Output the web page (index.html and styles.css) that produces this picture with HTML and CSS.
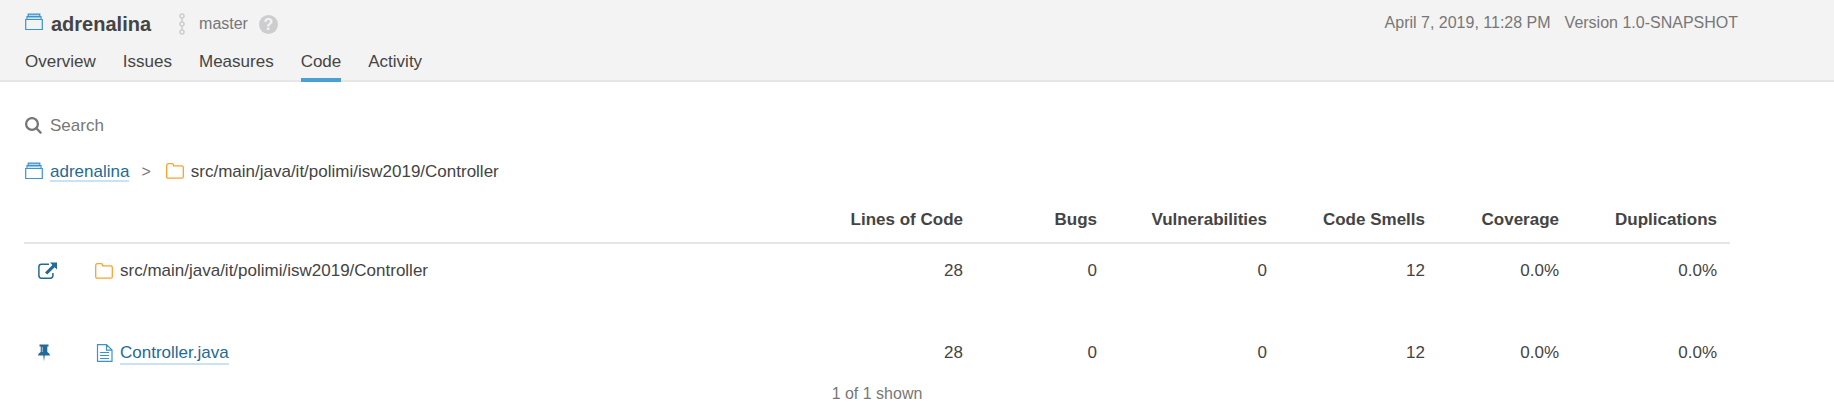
FILE: index.html
```html
<!DOCTYPE html>
<html lang="en">
<head>
<meta charset="utf-8">
<title>adrenalina - Code</title>
<link rel="stylesheet" href="styles.css">
</head>
<body>
<svg class="defs" aria-hidden="true">
  <symbol id="project" viewBox="0 0 18 18">
    <path fill="#b5d7ec" d="M3 1h12v4.500H3z"/>
    <path fill="none" stroke="#3b93cc" stroke-width="1.200" d="M.7 6.500h16.600v10H.7zM2 6V3.700h14V6M3.200 3.500V1.200h11.600v2.300"/>
  </symbol>
  <symbol id="folder" viewBox="0 0 18 18">
    <path fill="none" stroke="#ff9f2e" stroke-width="1.300" stroke-linejoin="round" d="M.7 3.400Q.7 1.700 2.400 1.700H6q1.500 0 1.500 1.500v.7h8.300q1.500 0 1.500 1.500v9.300q0 1.500-1.500 1.500H2.200q-1.500 0-1.500-1.500z"/>
  </symbol>
</svg>
<header class="header">
  <div class="header-top">
    <div class="project">
      <svg class="icon"><use href="#project"/></svg>
      <h1 class="title">adrenalina</h1>
      <svg class="branch-icon" viewBox="0 0 8 22" fill="none" stroke="#cdcdcd" stroke-width="1.500"><circle cx="4" cy="3" r="2"/><circle cx="4" cy="11" r="2"/><circle cx="4" cy="19" r="2"/><path d="M4 5v4M4 13v4"/></svg>
      <span class="branch">master</span>
      <button class="help" type="button" aria-label="Help">?</button>
    </div>
    <div class="meta"><span>April 7, 2019, 11:28 PM</span><span>Version 1.0-SNAPSHOT</span></div>
  </div>
  <nav class="tabs">
    <a class="tab" href="#">Overview</a>
    <a class="tab" href="#">Issues</a>
    <a class="tab" href="#">Measures</a>
    <a class="tab active" href="#">Code</a>
    <a class="tab" href="#">Activity</a>
  </nav>
</header>
<main class="page">
  <label class="search">
    <svg class="icon" viewBox="0 0 18 18" fill="none" stroke="#777" stroke-width="2.300"><circle cx="8" cy="7" r="5.900"/><path stroke-linecap="round" d="M12.300 11.300l4.300 4.300"/></svg>
    <input class="search-input" type="text" placeholder="Search" aria-label="Search">
  </label>
  <nav class="crumbs">
    <svg class="icon"><use href="#project"/></svg>
    <a class="link" href="#">adrenalina</a>
    <span class="separator">&gt;</span>
    <svg class="icon"><use href="#folder"/></svg>
    <span>src/main/java/it/polimi/isw2019/Controller</span>
  </nav>
  <table class="files">
    <colgroup><col class="col-action"><col><col class="col-narrow"><col class="col-narrow"><col class="col-widest"><col class="col-wide"><col class="col-narrow"><col class="col-wide"></colgroup>
    <thead>
      <tr><td></td><td></td><th scope="col">Lines of Code</th><th scope="col">Bugs</th><th scope="col">Vulnerabilities</th><th scope="col">Code Smells</th><th scope="col">Coverage</th><th scope="col">Duplications</th></tr>
    </thead>
    <tbody>
      <tr>
        <td class="action"><a class="action-link" href="#" aria-label="Open folder"><svg class="open-icon" viewBox="0 0 20 18"><path fill="none" stroke="#236a97" stroke-width="1.500" d="M11 2.200H3.500Q.9 2.200.9 4.800v8.800q0 2.600 2.600 2.600h8.800q2.600 0 2.600-2.600V11"/><path fill="#236a97" d="M12 .5h7v7l-2.300-2.300-7.500 7.400-2.200-2.200 7.400-7.500z"/></svg></a></td>
        <td class="name"><div class="name-row"><svg class="icon"><use href="#folder"/></svg><span>src/main/java/it/polimi/isw2019/Controller</span></div></td>
        <td>28</td><td>0</td><td>0</td><td>12</td><td>0.0%</td><td>0.0%</td>
      </tr>
      <tr class="spacer"><td colspan="8"></td></tr>
      <tr>
        <td class="action"><a class="action-link" href="#" aria-label="Pin file"><svg class="pin-icon" viewBox="0 0 12 18"><path fill="#236a97" d="M1.500.5h9v2H9.300V8Q11.900 9 12 11.600H6.700L6 17.500l-.7-5.900H0Q.1 9 2.700 8V2.500H1.500z"/><path stroke="#a7c3d5" d="M4.300 3v5"/></svg></a></td>
        <td class="name"><div class="name-row"><svg class="icon" viewBox="0 0 18 18"><path fill="none" stroke="#3b93cc" stroke-width="1.200" d="M2.500.6h9l5.500 5.500v11.300H2.500zM11.500.8v5.300h5.300M5 8.500h9M5 11.500h9M5 14.500h9"/></svg><a class="link" href="#">Controller.java</a></div></td>
        <td>28</td><td>0</td><td>0</td><td>12</td><td>0.0%</td><td>0.0%</td>
      </tr>
    </tbody>
  </table>
  <footer class="count">1 of 1 shown</footer>
</main>
</body>
</html>
```
FILE: styles.css
```css
* { box-sizing: border-box; }
body {
  margin: 0;
  background: #fff;
  color: #444;
  font: 17px/20px "Liberation Sans", Arial, sans-serif;
}
.defs { position: absolute; width: 0; height: 0; }
svg { display: block; flex: none; }
a { text-decoration: none; }
.icon { width: 18px; height: 18px; }

.header {
  padding: 12px 96px 0 25px;
  background: #f3f3f3;
  box-shadow: inset 0 -2px #e6e6e6;
}
.header-top { display: flex; justify-content: space-between; }
.project { display: flex; align-items: center; height: 24px; }
.project .icon { margin-bottom: 4px; }
.title { margin: 0 0 0 8px; font-size: 20px; line-height: 24px; }
.branch-icon { width: 8px; height: 22px; margin-left: 27px; }
.branch { margin-left: 13px; color: #777; font-size: 16px; }
.help {
  width: 19px;
  height: 19px;
  margin-left: 11px;
  padding: 0;
  border: 0;
  border-radius: 50%;
  background: #cdcdcd;
  color: #f3f3f3;
  font: bold 16px/19px "Liberation Sans", Arial, sans-serif;
}
.meta { display: flex; gap: 14px; color: #777; font-size: 16px; line-height: 22px; }
.tabs { display: flex; gap: 27px; margin-top: 16px; }
.tab { padding-bottom: 6px; border-bottom: 4px solid transparent; color: #444; }
.tab.active { border-color: #4b9fd5; }

.page { padding: 32px 104px 16px 24px; }
.search, .crumbs { display: flex; align-items: center; }
.search { height: 24px; }
.search-input {
  width: 300px;
  margin-left: 8px;
  padding: 0;
  border: 0;
  outline: 0;
  background: none;
  font: inherit;
}
.search-input::placeholder { color: #777; opacity: 1; }
.crumbs { height: 24px; margin-top: 22px; padding-left: 1px; }
.crumbs .icon { margin: 0 7px 2px 0; }
.link { color: #236a97; box-shadow: 0 2px #cae3f2; }
.crumbs .link { box-shadow: inset 0 -2px #cae3f2; }
.separator { margin: 0 15px 0 12px; color: #777; font-size: 16px; }

.files { width: 100%; margin-top: 14px; border-collapse: collapse; table-layout: fixed; }
.col-action { width: 70px; }
.col-narrow { width: 134px; }
.col-wide { width: 158px; }
.col-widest { width: 170px; }
.files th, .files td { padding: 17px 13px; text-align: right; white-space: nowrap; }
.files thead th, .files thead td { padding: 12px 13px; border-bottom: 2px solid #e6e6e6; }
.files th:nth-child(3) { padding-left: 0; }
.files .spacer td { height: 28px; padding: 0; }
.files .action { padding-left: 14px; }
.files .name { padding-left: 1px; text-align: left; }
.name-row { display: flex; align-items: center; gap: 7px; }
.action-link { display: block; }
.open-icon { width: 20px; height: 18px; }
.pin-icon { width: 12px; height: 18px; }
.count { margin-top: 4px; color: #777; font-size: 16px; text-align: center; }
```
